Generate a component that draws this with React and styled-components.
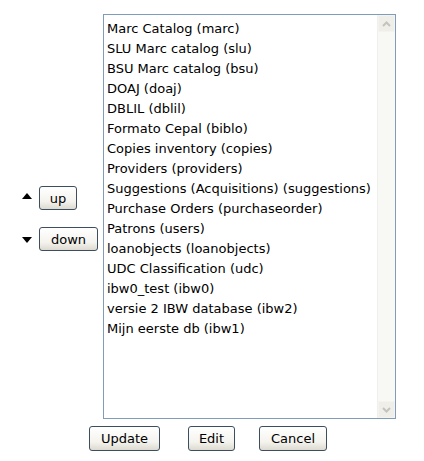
import styled, { createGlobalStyle } from 'styled-components';

const Global = createGlobalStyle`
  body {
    margin: 0;
    background: #fff;
    font-family: "DejaVu Sans", Verdana, sans-serif;
    font-size: 13px;
    color: #000;
  }
`;

const Page = styled.div`
  padding: 14px 0 0 0;
  width: 424px;
`;

const Top = styled.div`
  display: flex;
  align-items: center;
`;

const Mover = styled.div`
  width: 103px;
  display: flex;
  flex-direction: column;
  gap: 17px;
  padding: 4px 0 0 22px;
  box-sizing: border-box;
`;

const MoveRow = styled.div`
  display: flex;
  align-items: center;
  gap: 7px;
`;

const Arrow = styled.span`
  width: 0;
  height: 0;
  border-left: 5px solid transparent;
  border-right: 5px solid transparent;
  ${p => (p.$down ? 'border-top: 6px solid #000;' : 'border-bottom: 6px solid #000;')}
  margin-top: ${p => (p.$down ? '2px' : '-4px')};
`;

const Button = styled.button`
  font-family: "DejaVu Sans", Verdana, sans-serif;
  font-size: 13px;
  color: #000;
  width: ${p => p.$w}px;
  height: ${p => p.$h || 24}px;
  margin-left: ${p => p.$ml || 0}px;
  padding: 0;
  border: 1px solid #3c4e60;
  border-radius: 3px;
  background: linear-gradient(#ffffff, #f4f3ee 65%, #dcdad0);
  box-sizing: border-box;
`;

const ListBox = styled.div`
  width: 293px;
  height: 405px;
  border: 1px solid #7f9db9;
  box-sizing: border-box;
  display: flex;
`;

const Items = styled.div`
  flex: 1;
  padding: 4px 0 0 3px;
`;

const Item = styled.div`
  height: 20px;
  line-height: 20px;
  white-space: nowrap;
`;

const Scroll = styled.div`
  width: 17px;
  display: flex;
  flex-direction: column;
  background: #f8f8f5;
  border-left: 1px solid #f0f0ec;
`;

const ScrollBtn = styled.div`
  height: 17px;
  background: #efeee9;
  border: 1px solid #f4f3ef;
  box-sizing: border-box;
  display: flex;
  align-items: center;
  justify-content: center;
`;

const Track = styled.div`
  flex: 1;
`;

const Bottom = styled.div`
  display: flex;
  padding: 7px 0 0 89px;
`;

const items = [
  'Marc Catalog (marc)',
  'SLU Marc catalog (slu)',
  'BSU Marc catalog (bsu)',
  'DOAJ (doaj)',
  'DBLIL (dblil)',
  'Formato Cepal (biblo)',
  'Copies inventory (copies)',
  'Providers (providers)',
  'Suggestions (Acquisitions) (suggestions)',
  'Purchase Orders (purchaseorder)',
  'Patrons (users)',
  'loanobjects (loanobjects)',
  'UDC Classification (udc)',
  'ibw0_test (ibw0)',
  'versie 2 IBW database (ibw2)',
  'Mijn eerste db (ibw1)',
];

const Chevron = ({ up }) => (
  <svg width="9" height="6" viewBox="0 0 9 6">
    <path d={up ? 'M1 5 L4.5 1.5 L8 5' : 'M1 1 L4.5 4.5 L8 1'} fill="none" stroke="#c4c3bd" strokeWidth="2" />
  </svg>
);

export default function App() {
  return (
    <Page>
      <Global />
      <Top>
        <Mover>
          <MoveRow>
            <Arrow />
            <Button $w={38} $h={24}>up</Button>
          </MoveRow>
          <MoveRow>
            <Arrow $down />
            <Button $w={59} $h={24}>down</Button>
          </MoveRow>
        </Mover>
        <ListBox>
          <Items>
            {items.map(t => (
              <Item key={t}>{t}</Item>
            ))}
          </Items>
          <Scroll>
            <ScrollBtn><Chevron up /></ScrollBtn>
            <Track />
            <ScrollBtn><Chevron /></ScrollBtn>
          </Scroll>
        </ListBox>
      </Top>
      <Bottom>
        <Button $w={71} $h={25}>Update</Button>
        <Button $w={47} $h={25} $ml={28}>Edit</Button>
        <Button $w={68} $h={25} $ml={24}>Cancel</Button>
      </Bottom>
    </Page>
  );
}
